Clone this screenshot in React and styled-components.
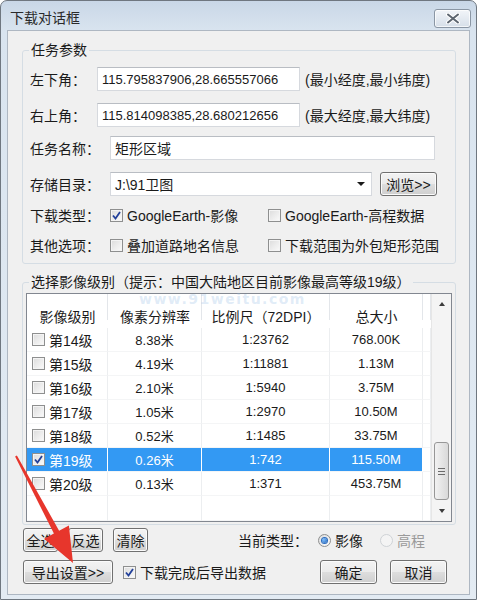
import React from 'react';
import styled, { createGlobalStyle } from 'styled-components';

const GlobalStyle = createGlobalStyle`
  html, body { margin: 0; padding: 0; background: #ffffff; }
  body {
    font-family: "Liberation Sans", "Noto Sans CJK SC", sans-serif;
    font-size: 14px;
    color: #1a1a1a;
  }
  * { box-sizing: border-box; }
`;

const Window = styled.div`
  position: relative;
  width: 477px;
  height: 600px;
  border: 1px solid #6f7780;
  border-radius: 7px 7px 0 0;
  background: linear-gradient(#c9d7e7 0px, #d9e4ef 30px, #e3ebf3 100%);
  padding: 0 6px 4px 6px;
  display: flex;
  flex-direction: column;
  overflow: hidden;
`;

const TitleBar = styled.div`
  height: 29px;
  display: flex;
  align-items: center;
  justify-content: space-between;
  padding-left: 3px;
`;

const Title = styled.span`
  font-size: 14px;
  color: #2a2a2a;
  margin-top: 2px;
`;

const CloseButton = styled.div`
  width: 37px;
  height: 19px;
  margin-top: 6px;
  margin-right: -1px;
  border: 1px solid #8a96a4;
  border-radius: 3px;
  background: linear-gradient(#f2f5f9, #d6dfe9);
  box-shadow: inset 0 0 0 1px rgba(255, 255, 255, 0.7);
  display: flex;
  align-items: center;
  justify-content: center;
`;

const Panel = styled.div`
  flex: 1;
  border: 1px solid #aeb7c2;
  background: #f0f0f0;
  display: flex;
  flex-direction: column;
`;

const Group = styled.div`
  position: relative;
  margin: ${(p) => p.$top}px 13px 0 14px;
  border: 1px solid #d5dde4;
  border-radius: 3px;
  padding: ${(p) => p.$pad};
`;

const Legend = styled.span`
  position: absolute;
  left: 6px;
  top: -10px;
  padding: 0 2px;
  background: #f0f0f0;
  font-size: 14px;
  line-height: 18px;
  color: #1a1a1a;
`;

const Row = styled.div`
  display: flex;
  align-items: center;
  height: 24px;
  margin-top: ${(p) => p.$top || 0}px;
`;

const Label = styled.span`
  width: ${(p) => p.$w}px;
  flex: none;
  font-size: 14px;
`;

const TextBox = styled.div`
  width: ${(p) => p.$w}px;
  height: 24px;
  background: #ffffff;
  border: 1px solid #d6d9de;
  border-top-color: #b9bdc3;
  display: flex;
  align-items: center;
  padding-left: 4px;
  font-size: ${(p) => (p.$cjk ? 14 : 13)}px;
  color: #1a1a1a;
`;

const Hint = styled.span`
  margin-left: 5px;
  font-size: 14px;
`;

const Combo = styled(TextBox)`
  justify-content: space-between;
  padding-right: 6px;
`;

const Caret = styled.span`
  width: 0;
  height: 0;
  border-left: 4px solid transparent;
  border-right: 4px solid transparent;
  border-top: 4px solid #1a1a1a;
`;

const Button = styled.div`
  width: ${(p) => p.$w}px;
  height: 24px;
  flex: none;
  margin-left: ${(p) => (p.$ml === 'auto' ? 'auto' : `${p.$ml || 0}px`)};
  border: 1px solid #707070;
  border-radius: 3px;
  background: linear-gradient(#f3f3f3 0%, #ebebeb 48%, #dddddd 52%, #cfcfcf 100%);
  box-shadow: inset 0 0 0 1px #fbfbfb;
  display: flex;
  align-items: center;
  justify-content: center;
  font-size: 14px;
  color: #1a1a1a;
`;

const Option = styled.label`
  display: flex;
  align-items: center;
  gap: 4px;
  width: ${(p) => (p.$w ? `${p.$w}px` : 'auto')};
  flex: none;
  font-size: 14px;
  color: ${(p) => (p.$disabled ? '#9a9a9a' : '#1a1a1a')};
  margin-left: ${(p) => p.$ml || 0}px;
`;

const Box = styled.span`
  width: 13px;
  height: 13px;
  flex: none;
  border: 1px solid #8e8f8f;
  background: linear-gradient(135deg, #dcdcdc, #fbfbfb);
  box-shadow: inset 0 0 0 1px #f4f4f4;
  display: flex;
  align-items: center;
  justify-content: center;
`;

const Radio = styled.span`
  width: 13px;
  height: 13px;
  flex: none;
  border-radius: 50%;
  border: 1px solid ${(p) => (p.$disabled ? '#cfd3d6' : '#8e8f8f')};
  background: ${(p) => (p.$disabled ? '#f4f4f4' : 'linear-gradient(135deg, #dcdcdc, #fbfbfb)')};
  display: flex;
  align-items: center;
  justify-content: center;
  &::after {
    content: '';
    display: ${(p) => (p.$on ? 'block' : 'none')};
    width: 5px;
    height: 5px;
    border-radius: 50%;
    background: radial-gradient(circle at 35% 35%, #7fc1ff, #1e5fb5);
    box-shadow: 0 0 0 1px #2a6bc0;
  }
`;

const Table = styled.div`
  position: relative;
  display: flex;
  width: 426px;
  height: 229px;
  border: 1px solid #828790;
  background: #ffffff;
`;

const Grid = styled.div`
  display: grid;
  grid-template-columns: 81px 94px 128px 93px 8px;
  grid-template-rows: 34px repeat(7, 24px) 25px;
  width: 404px;
`;

const HeadCell = styled.div`
  display: flex;
  align-items: flex-end;
  justify-content: center;
  padding-bottom: 3px;
  font-size: 14px;
  line-height: 16px;
  color: #1a1a1a;
  background: linear-gradient(to right, transparent calc(100% - 1px), #e3e6ea calc(100% - 1px));
  background-size: 100% 26px;
  background-repeat: no-repeat;
`;

const Cell = styled.div`
  display: flex;
  align-items: center;
  justify-content: ${(p) => (p.$left ? 'flex-start' : 'center')};
  gap: 4px;
  padding-left: ${(p) => (p.$left ? 5 : 0)}px;
  font-size: ${(p) => (p.$cjk ? 14 : 13)}px;
  color: ${(p) => (p.$sel ? '#ffffff' : '#1a1a1a')};
  background: ${(p) => (p.$sel ? '#3399f3' : '#ffffff')};
  border-right: 1px solid ${(p) => (p.$sel ? '#ffffff' : '#eceef0')};
  border-bottom: 1px solid #f4f5f6;
`;

const Scroll = styled.div`
  width: 20px;
  display: flex;
  flex-direction: column;
  align-items: center;
  background: #f4f4f4;
  border-left: 1px solid #e6e6e6;
`;

const Arrow = styled.div`
  height: 20px;
  display: flex;
  align-items: center;
  justify-content: center;
  &::after {
    content: '';
    border-left: 3px solid transparent;
    border-right: 3px solid transparent;
    ${(p) => (p.$up ? 'border-bottom: 4px solid #3c3c3c;' : 'border-top: 4px solid #3c3c3c;')}
  }
`;

const Track = styled.div`
  flex: 1;
  width: 100%;
  padding: 128px 2px 0 2px;
`;

const Thumb = styled.div`
  height: 58px;
  border: 1px solid #979797;
  border-radius: 3px;
  background: linear-gradient(to right, #f2f2f2, #d9d9d9);
  display: flex;
  flex-direction: column;
  align-items: center;
  justify-content: center;
  gap: 2px;
`;

const Grip = styled.span`
  width: 7px;
  height: 1px;
  background: #6b6b6b;
`;

const Watermark = styled.span`
  position: absolute;
  left: 112px;
  top: -1px;
  font-family: "DejaVu Sans", sans-serif;
  font-weight: bold;
  font-size: 14px;
  line-height: 12px;
  letter-spacing: 1.5px;
  color: rgba(150, 190, 230, 0.3);
  pointer-events: none;
`;

const ButtonRow = styled.div`
  display: flex;
  align-items: center;
  height: 24px;
  margin-top: ${(p) => p.$top}px;
  padding: 0 22px 0 15px;
`;

const TypeLabel = styled.span`
  margin-left: 90px;
  margin-right: 10px;
  font-size: 14px;
`;

const Overlay = styled.svg`
  position: absolute;
  left: 0;
  top: 0;
  pointer-events: none;
`;

const Check = () => (
  <svg width="9" height="9" viewBox="0 0 9 9">
    <path d="M1 4.5 L3.5 7.5 L8 1" fill="none" stroke="#22409a" strokeWidth="1.8" />
  </svg>
);

const CheckBox = ({ on }) => <Box>{on ? <Check /> : null}</Box>;

const levels = [
  ['第14级', '8.38米', '1:23762', '768.00K'],
  ['第15级', '4.19米', '1:11881', '1.13M'],
  ['第16级', '2.10米', '1:5940', '3.75M'],
  ['第17级', '1.05米', '1:2970', '10.50M'],
  ['第18级', '0.52米', '1:1485', '33.75M'],
  ['第19级', '0.26米', '1:742', '115.50M'],
  ['第20级', '0.13米', '1:371', '453.75M'],
];

export default function App() {
  return (
    <>
      <GlobalStyle />
      <Window>
        <TitleBar>
          <Title>下载对话框</Title>
          <CloseButton>
            <svg width="14" height="11" viewBox="0 0 14 11">
              <path d="M2 1.5 L12 9.5 M12 1.5 L2 9.5" stroke="#ffffff" strokeWidth="4" strokeLinecap="round" />
              <path d="M2 1.5 L12 9.5 M12 1.5 L2 9.5" stroke="#5d6670" strokeWidth="2" strokeLinecap="round" />
            </svg>
          </CloseButton>
        </TitleBar>

        <Panel>
          <Group $top={19} $pad="16px 7px 6px 7px">
            <Legend>任务参数</Legend>
            <Row>
              <Label $w={67}>左下角：</Label>
              <TextBox $w={203}>115.795837906,28.665557066</TextBox>
              <Hint>(最小经度,最小纬度)</Hint>
            </Row>
            <Row $top={12}>
              <Label $w={67}>右上角：</Label>
              <TextBox $w={203}>115.814098385,28.680212656</TextBox>
              <Hint>(最大经度,最大纬度)</Hint>
            </Row>
            <Row $top={9}>
              <Label $w={80}>任务名称：</Label>
              <TextBox $w={325} $cjk>矩形区域</TextBox>
            </Row>
            <Row $top={12}>
              <Label $w={80}>存储目录：</Label>
              <Combo $w={262} $cjk>
                <span>J:\91卫图</span>
                <Caret />
              </Combo>
              <Button $w={57} $ml={8}>浏览&gt;&gt;</Button>
            </Row>
            <Row $top={7}>
              <Label $w={80}>下载类型：</Label>
              <Option $w={158}>
                <CheckBox on />
                GoogleEarth-影像
              </Option>
              <Option>
                <CheckBox />
                GoogleEarth-高程数据
              </Option>
            </Row>
            <Row $top={6}>
              <Label $w={80}>其他选项：</Label>
              <Option $w={158}>
                <CheckBox />
                叠加道路地名信息
              </Option>
              <Option>
                <CheckBox />
                下载范围为外包矩形范围
              </Option>
            </Row>
          </Group>

          <Group $top={18} $pad="10px 3px 2px 3px">
            <Legend>选择影像级别（提示：中国大陆地区目前影像最高等级19级）</Legend>
            <Table>
              <Watermark>www.91weitu.com</Watermark>
              <Grid>
                <HeadCell>影像级别</HeadCell>
                <HeadCell>像素分辨率</HeadCell>
                <HeadCell>比例尺（72DPI）</HeadCell>
                <HeadCell>总大小</HeadCell>
                <HeadCell />
                {levels.map((r) => {
                  const sel = r[0] === '第19级';
                  return (
                    <React.Fragment key={r[0]}>
                      <Cell $left $cjk $sel={sel}>
                        <CheckBox on={sel} />
                        {r[0]}
                      </Cell>
                      <Cell $sel={sel}>{r[1]}</Cell>
                      <Cell $sel={sel}>{r[2]}</Cell>
                      <Cell $sel={sel}>{r[3]}</Cell>
                      <Cell />
                    </React.Fragment>
                  );
                })}
                <Cell />
                <Cell />
                <Cell />
                <Cell />
                <Cell />
              </Grid>
              <Scroll>
                <Arrow $up />
                <Track>
                  <Thumb>
                    <Grip />
                    <Grip />
                    <Grip />
                  </Thumb>
                </Track>
                <Arrow />
              </Scroll>
            </Table>
          </Group>

          <ButtonRow $top={3}>
            <Button $w={35}>全选</Button>
            <Button $w={35} $ml={10}>反选</Button>
            <Button $w={35} $ml={10}>清除</Button>
            <TypeLabel>当前类型：</TypeLabel>
            <Option>
              <Radio $on />
              影像
            </Option>
            <Option $ml={17} $disabled>
              <Radio $disabled />
              高程
            </Option>
          </ButtonRow>

          <ButtonRow $top={8}>
            <Button $w={90}>导出设置&gt;&gt;</Button>
            <Option $ml={10}>
              <CheckBox on />
              下载完成后导出数据
            </Option>
            <Button $w={57} $ml="auto">确定</Button>
            <Button $w={57} $ml={13}>取消</Button>
          </ButtonRow>
        </Panel>

        <Overlay width="477" height="600" viewBox="0 0 477 600">
          <polygon
            points="14.1,455.5 52.9,532.5 43.1,537.7 72,562 67.9,524.5 58.1,529.7 15.9,454.5"
            fill="#e7362c"
          />
        </Overlay>
      </Window>
    </>
  );
}
